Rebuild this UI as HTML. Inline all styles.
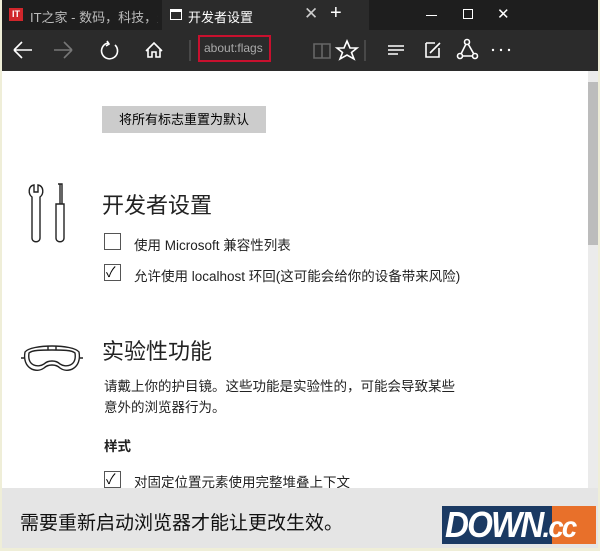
<!DOCTYPE html>
<html><head><meta charset="utf-8"><style>
*{margin:0;padding:0;box-sizing:border-box}
body{width:600px;height:551px;overflow:hidden;background:#efeed8;font-family:"Liberation Sans","Noto Sans CJK SC",sans-serif;position:relative}
.abs{position:absolute}
#win{left:2px;top:0;width:596px;height:548px;background:#fff;overflow:hidden}
#tabs{left:0;top:0;width:596px;height:30px;background:#1e1e1e}
#tb{left:0;top:30px;width:596px;height:41px;background:#2b2b2b}
.w{color:#fff}
.cb{width:17px;height:17px;border:1px solid #555;background:#fff}
.t{font-size:13.5px;color:#222;white-space:nowrap}
</style></head><body>
<div id="win" class="abs">
<div id="tabs" class="abs">
 <div class="abs" style="left:7px;top:8px;width:14px;height:13px;background:#d0262b;color:#fff;font-size:9px;font-weight:bold;line-height:13px;text-align:center">IT</div>
 <div class="abs" style="left:28px;top:7px;width:128px;overflow:hidden;color:#bbb;font-size:13px;white-space:nowrap">IT之家 - 数码，科技，生活 ·</div>
 <div class="abs" style="left:160px;top:0;width:207px;height:30px;background:#2b2b2b"></div>
 <div class="abs" style="left:168px;top:9px;width:12px;height:11px;border:1.5px solid #fff;border-top-width:3px"></div>
 <div class="abs w" style="left:186px;top:7px;font-size:13px">开发者设置</div>
 <div class="abs" style="left:302px;top:4px;color:#ccc;font-size:17px">✕</div>
 <div class="abs w" style="left:328px;top:2px;font-size:20px;font-weight:300">+</div>
 <div class="abs" style="left:424px;top:15px;width:11px;height:1px;background:#fff"></div>
 <div class="abs" style="left:461px;top:9px;width:10px;height:10px;border:1px solid #fff"></div>
 <div class="abs w" style="left:495px;top:5px;font-size:15px">✕</div>
</div>
<div id="tb" class="abs">
 <svg class="abs" style="left:0;top:0" width="596" height="41" fill="none" stroke="#fff" stroke-width="1.6">
  <path d="M12 20H30M12 20L20 12M12 20L20 28"/>
  <path d="M52 20H70M70 20L62 12M70 20L62 28" stroke="#777"/>
  <path d="M106 13A8 8 0 1 0 113 15M105 11L107 14L104 16"/>
  <path d="M144 21L152 13L160 21M146 19V27H150V22H154V27H158V19"/>
  <path d="M188 10V31" stroke="#666" stroke-width="1"/>
  <path d="M312 14H320V28H312ZM320 14H328V28H320Z" stroke="#666"/>
  <path d="M345 11L348 18H355L349.5 22.5L352 29L345 25L338 29L340.5 22.5L335 18H342Z"/>
  <path d="M363 10V31" stroke="#666" stroke-width="1"/>
  <path d="M386 16H402M386 20H402M386 24H396"/>
  <path d="M424 13H433M424 13V27H437V18M428 23L438 13"/>
  <path d="M465 12L458 26H473Z"/><circle cx="465" cy="12" r="2.5" fill="#2b2b2b"/><circle cx="458" cy="26" r="2.5" fill="#2b2b2b"/><circle cx="473" cy="26" r="2.5" fill="#2b2b2b"/>
  <circle cx="491" cy="20" r="1.2" fill="#fff" stroke="none"/><circle cx="499" cy="20" r="1.2" fill="#fff" stroke="none"/><circle cx="507" cy="20" r="1.2" fill="#fff" stroke="none"/>
 </svg>
 <div class="abs" style="left:196px;top:5px;width:73px;height:27px;border:2px solid #c8102e"></div>
 <div class="abs" style="left:202px;top:11px;color:#aaa;font-size:12px">about:flags</div>
</div>
<div class="abs" style="left:586px;top:71px;width:10px;height:417px;background:#ebebeb"></div>
<div class="abs" style="left:586px;top:82px;width:10px;height:163px;background:#bcbcbc"></div>
<div class="abs" style="left:100px;top:106px;width:164px;height:27px;background:#ccc;font-size:13px;line-height:27px;text-align:center;color:#000">将所有标志重置为默认</div>
<svg class="abs" style="left:20px;top:180px" width="60" height="70" fill="none" stroke="#222" stroke-width="1.4">
 <path d="M12 5C6 6 6 14 10 17V58C10 63 18 63 18 58V17C22 14 22 6 16 5V12H12Z"/>
 <path d="M36 4H40V24M38 4V24M34 24H42V58C42 63 34 63 34 58Z"/>
</svg>
<svg class="abs" style="left:18px;top:340px" width="64" height="40" fill="none" stroke="#222" stroke-width="1.4">
 <path d="M5 12C8 8 20 6 32 6C44 6 56 8 59 12C62 28 48 34 40 28C36 24 28 24 24 28C16 34 2 28 5 12Z"/>
 <path d="M9 13C12 10 22 10 32 10C42 10 52 10 55 13C57 26 46 28 40 24C36 20 28 20 24 24C18 28 7 26 9 13Z"/>
 <path d="M1 18H4M60 18H63M28 6V10M36 6V10"/>
</svg>
<div class="abs" style="left:100px;top:188px;font-size:22px;color:#222">开发者设置</div>
<div class="abs cb" style="left:102px;top:233px"></div>
<div class="abs t" style="left:132px;top:234px">使用 Microsoft 兼容性列表</div>
<div class="abs cb" style="left:102px;top:264px"></div>
<div class="abs" style="left:104px;top:262px;font-size:14px">✓</div>
<div class="abs t" style="left:132px;top:265px">允许使用 localhost 环回(这可能会给你的设备带来风险)</div>
<div class="abs" style="left:100px;top:334px;font-size:22px;color:#222">实验性功能</div>
<div class="abs t" style="left:102px;top:376px;line-height:21px">请戴上你的护目镜。这些功能是实验性的，可能会导致某些<br>意外的浏览器行为。</div>
<div class="abs t" style="left:102px;top:435px;font-weight:bold">样式</div>
<div class="abs cb" style="left:102px;top:471px"></div>
<div class="abs" style="left:104px;top:469px;font-size:14px">✓</div>
<div class="abs t" style="left:132px;top:471px">对固定位置元素使用完整堆叠上下文</div>
<div class="abs" style="left:0;top:488px;width:596px;height:60px;background:#e5e5e5"></div>
<div class="abs" style="left:18px;top:508px;font-size:19px;color:#111">需要重新启动浏览器才能让更改生效。</div>
<div class="abs" style="left:440px;top:506px;width:154px;height:38px;overflow:hidden">
 <div class="abs" style="left:0;top:0;width:110px;height:38px;background:#1b3a63"></div>
 <div class="abs" style="left:110px;top:0;width:44px;height:38px;background:#e8702a"></div>
 <div class="abs" style="left:3px;top:1px;font-size:36px;line-height:36px;font-weight:bold;font-style:italic;color:#fff;letter-spacing:-2px;white-space:nowrap;transform:scaleX(0.92);transform-origin:left">DOWN<span style="font-size:30px">.cc</span></div>
</div>
</div>
</body></html>
